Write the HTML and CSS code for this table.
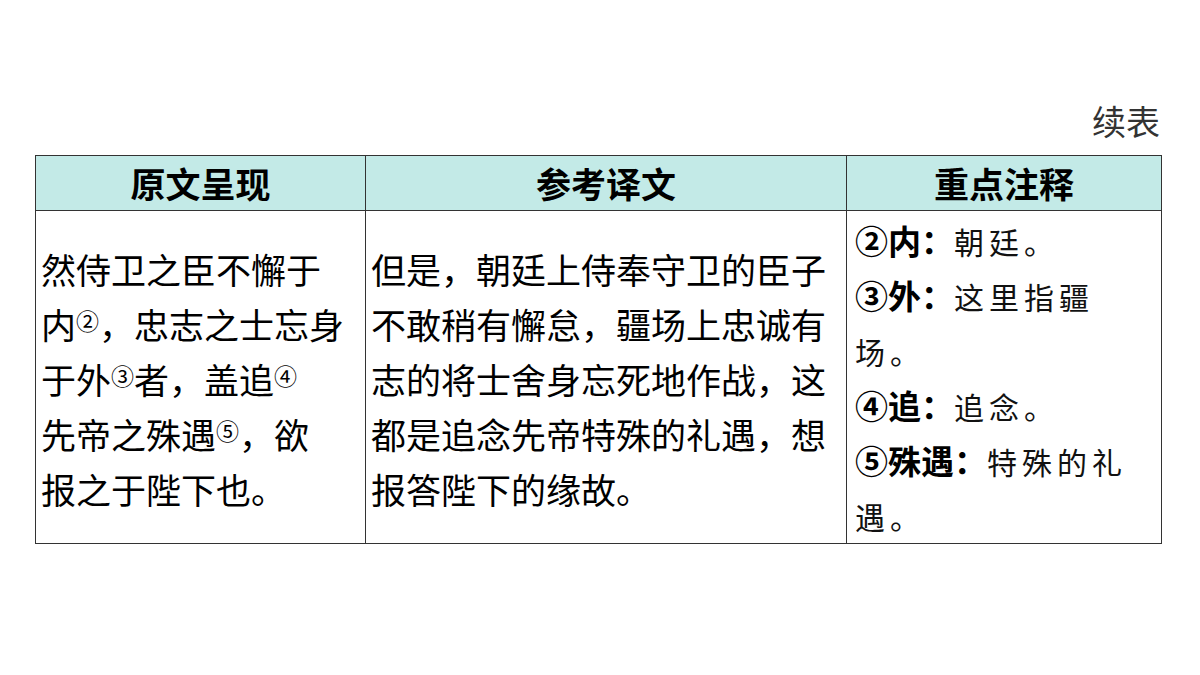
FILE: index.html
```html
<!DOCTYPE html>
<html lang="zh-CN">
<head>
<meta charset="utf-8">
<title>续表</title>
<link rel="stylesheet" href="styles.css">
</head>
<body>
<div class="page">
  <div class="caption">续表</div>
  <table class="grid">
    <colgroup>
      <col class="c1">
      <col class="c2">
      <col class="c3">
    </colgroup>
    <thead>
      <tr class="head">
        <th>原文呈现</th>
        <th>参考译文</th>
        <th>重点注释</th>
      </tr>
    </thead>
    <tbody>
      <tr class="body">
        <td class="orig">然侍卫之臣不懈于<br>内<span class="sup">②</span>，忠志之士忘身<br>于外<span class="sup">③</span>者，盖追<span class="sup">④</span><br>先帝之殊遇<span class="sup">⑤</span>，欲<br>报之于陛下也。</td>
        <td class="trans">但是，朝廷上侍奉守卫的臣子<br>不敢稍有懈怠，疆场上忠诚有<br>志的将士舍身忘死地作战，这<br>都是追念先帝特殊的礼遇，想<br>报答陛下的缘故。</td>
        <td class="notes">
          <div class="note"><b class="term">②内：</b><span class="expl">朝廷。</span></div>
          <div class="note"><b class="term">③外：</b><span class="expl">这里指疆<br>场。</span></div>
          <div class="note"><b class="term">④追：</b><span class="expl">追念。</span></div>
          <div class="note"><b class="term">⑤殊遇：</b><span class="expl">特殊的礼<br>遇。</span></div>
        </td>
      </tr>
    </tbody>
  </table>
</div>
</body>
</html>
```

FILE: styles.css
```css
html, body {
  margin: 0;
  padding: 0;
  background: #ffffff;
}

body {
  font-family: "Noto Sans CJK SC", "Microsoft YaHei", sans-serif;
  color: #000;
}

.page {
  width: 1200px;
  height: 675px;
  padding-top: 101px;
  box-sizing: border-box;
}

.caption {
  text-align: right;
  padding-right: 40px;
  font-size: 34px;
  line-height: 40px;
  height: 40px;
  color: #333;
  margin-bottom: 14px;
}

.grid {
  margin-left: 35px;
  width: 1126px;
  border-collapse: collapse;
  table-layout: fixed;
}

.c1 { width: 330px; }
.c2 { width: 481px; }
.c3 { width: 315px; }

.grid th,
.grid td {
  border: 1px solid #333;
}

.head th {
  height: 54px;
  padding: 0;
  background: #c3eae7;
  font-size: 35px;
  font-weight: 700;
  line-height: 54px;
  text-align: center;
  vertical-align: middle;
}

.body td {
  height: 332px;
  box-sizing: border-box;
  padding: 2px 6px 0 5px;
  font-size: 35px;
  line-height: 55px;
  vertical-align: middle;
  text-align: left;
  white-space: nowrap;
}

.sup {
  font-size: 23px;
  vertical-align: 9px;
  line-height: 1;
}

.body td.notes {
  vertical-align: top;
  padding: 2px 8px 0 8px;
}

.note {
  line-height: 55px;
  font-size: 33px;
}

.term {
  font-weight: 700;
  font-size: 33px;
  line-height: 1;
}

.expl {
  font-weight: 400;
  font-size: 30px;
  line-height: 1;
  letter-spacing: 5px;
  color: #111;
}
```
